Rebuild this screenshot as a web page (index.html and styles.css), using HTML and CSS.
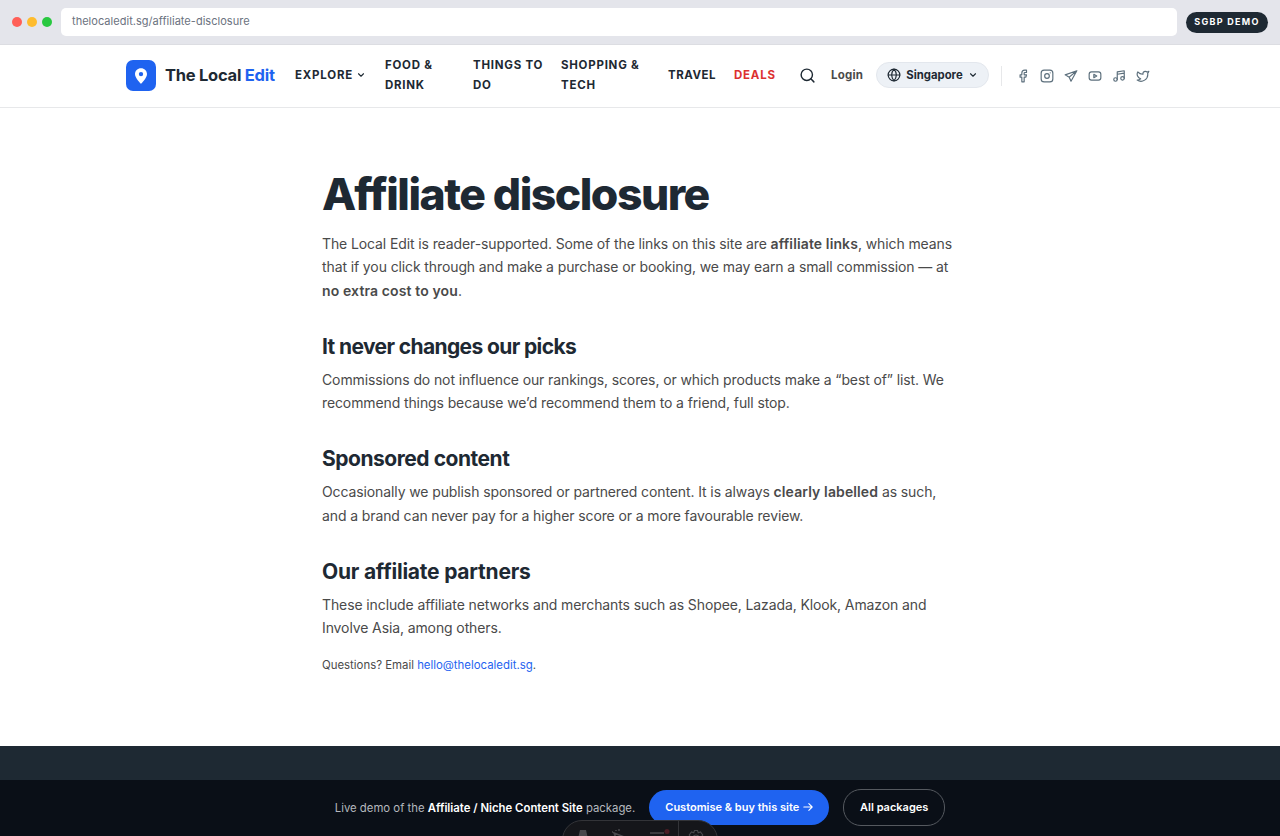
FILE: index.html
```html
<!DOCTYPE html>
<html lang="en">

<head>
    <meta charset="UTF-8" />
    <meta name="viewport" content="width=device-width, initial-scale=1.0" />
    <title>Affiliate disclosure | The Local Edit</title>
    <link rel="stylesheet" href="styles.css">
</head>

<body>
    <div class="browser-bar">
        <div class="dots">
            <span class="dot red"></span>
            <span class="dot yellow"></span>
            <span class="dot green"></span>
        </div>
        <div class="address">thelocaledit.sg/affiliate-disclosure</div>
        <span class="demo-badge">SGBP DEMO</span>
    </div>

    <header class="site-header">
        <a class="logo" href="#">
            <span class="logo-mark">
                <svg width="18" height="18" viewBox="0 0 24 24"><path fill="#fff" fill-rule="evenodd" d="M12 1.500c-4.500 0-8 3.500-8 7.900C4 15 12 22.500 12 22.500S20 15 20 9.400c0-4.400-3.500-7.900-8-7.900zm0 5a2.900 2.900 0 1 1 0 5.800 2.900 2.900 0 0 1 0-5.800z" /></svg>
            </span>
            <span class="logo-text">The Local <b>Edit</b></span>
        </a>

        <nav class="main-nav">
            <a class="explore" href="#">EXPLORE
                <svg class="icon chevron" width="10" height="10" viewBox="0 0 24 24"><path d="m6 9 6 6 6-6" /></svg>
            </a>
            <a class="food" href="#">FOOD &amp; DRINK</a>
            <a class="things" href="#">THINGS TO DO</a>
            <a class="shopping" href="#">SHOPPING &amp; TECH</a>
            <a class="travel" href="#">TRAVEL</a>
            <a class="deals" href="#">DEALS</a>
        </nav>

        <div class="tools">
            <svg class="icon search" width="17" height="17" viewBox="0 0 24 24"><circle cx="11" cy="11" r="8" /><path d="m21 21-4.300-4.300" /></svg>
            <a class="login" href="#">Login</a>
            <button class="region">
                <svg class="icon" width="14" height="14" viewBox="0 0 24 24"><circle cx="12" cy="12" r="10" /><path d="M2 12h20M12 2a15.300 15.300 0 0 1 4 10 15.300 15.300 0 0 1-4 10 15.300 15.300 0 0 1-4-10 15.300 15.300 0 0 1 4-10z" /></svg>
                <span>Singapore</span>
                <svg class="icon chevron" width="10" height="10" viewBox="0 0 24 24"><path d="m6 9 6 6 6-6" /></svg>
            </button>
        </div>

        <div class="social">
            <svg class="icon" viewBox="0 0 24 24"><path d="M18 2h-3a5 5 0 0 0-5 5v3H7v4h3v8h4v-8h3l1-4h-4V7a1 1 0 0 1 1-1h3z" /></svg>
            <svg class="icon" viewBox="0 0 24 24"><rect x="2" y="2" width="20" height="20" rx="5" /><circle cx="12" cy="12" r="4" /><path d="M17.500 6.500h.01" /></svg>
            <svg class="icon" viewBox="0 0 24 24"><path d="M22 3 2 10l7 4 3 7zM22 3 9 14" /></svg>
            <svg class="icon" viewBox="0 0 24 24"><rect x="2" y="5" width="20" height="14" rx="4" /><path d="m10 9 5 3-5 3z" /></svg>
            <svg class="icon" viewBox="0 0 24 24"><path d="M9 18V5l12-2v13M9 9l12-2" /><circle cx="6" cy="18" r="3" /><circle cx="18" cy="16" r="3" /></svg>
            <svg class="icon" viewBox="0 0 24 24"><path d="M22 4s-.7 2.100-2 3.400c1.600 10-9.400 17.300-18 11.600 2.200.1 4.400-.6 6-2C3 15.500.5 9.600 3 5c2.200 2.600 5.600 4.100 9 4-.9-4.200 4-6.600 7-3.800 1.100 0 3-1.200 3-1.200z" /></svg>
        </div>
    </header>

    <main class="article">
        <h1>Affiliate disclosure</h1>
        <p>The Local Edit is reader-supported. Some of the links on this site are <strong>affiliate links</strong>, which means that if you click through and make a purchase or booking, we may earn a small commission — at <strong>no extra cost to you</strong>.</p>

        <h2 class="picks">It never changes our picks</h2>
        <p>Commissions do not influence our rankings, scores, or which products make a “best of” list. We recommend things because we’d recommend them to a friend, full stop.</p>

        <h2 class="sponsored">Sponsored content</h2>
        <p>Occasionally we publish sponsored or partnered content. It is always <strong>clearly labelled</strong> as such, and a brand can never pay for a higher score or a more favourable review.</p>

        <h2 class="partners">Our affiliate partners</h2>
        <p>These include affiliate networks and merchants such as Shopee, Lazada, Klook, Amazon and Involve Asia, among others.</p>
        <p class="questions">Questions? Email <a href="#">hello@thelocaledit.sg</a>.</p>
    </main>

    <footer class="site-footer"></footer>

    <div class="demo-bar">
        <span class="demo-text">Live demo of the <b>Affiliate / Niche Content Site</b> package.</span>
        <a class="buy" href="#">Customise &amp; buy this site
            <svg class="icon chevron" width="10" height="10" viewBox="0 0 24 24"><path d="M2 12h20M14 4l8 8-8 8" /></svg>
        </a>
        <a class="packages" href="#">All packages</a>
        <div class="dev-toolbar">
            <svg width="16" height="18" viewBox="0 0 16 18"><path class="solid" d="M5 1h6l4 17h-4l-3-5-3 5H1z" /></svg>
            <svg width="18" height="18" viewBox="0 0 18 18"><path d="M3 4l13 5-6 2-2 6zM5 1v1M8 0v2M1 3h1" /></svg>
            <svg width="21" height="18" viewBox="0 0 21 18"><path d="M1 4h14M1 11h15" /><circle class="alert" cx="18" cy="2.500" r="2.500" /></svg>
            <span class="separator"></span>
            <svg width="18" height="18" viewBox="0 0 24 24"><path d="M10 2h4l1 3 3-1 3 4-2 3 2 4-3 4-3-1-1 3h-4l-1-3-3 1-3-4 2-4-2-3 3-4 3 1z" /><circle cx="12" cy="12" r="4" /></svg>
        </div>
    </div>
</body>

</html>
```
FILE: styles.css
```css
* {
    box-sizing: border-box;
}

body {
    font-family: Inter, "Liberation Sans", sans-serif;
    margin: 0;
    height: 836px;
    overflow: hidden;
    display: flex;
    flex-direction: column;
    background: white;
    color: #1e2933;
}

a {
    color: inherit;
    text-decoration: none;
}

.icon {
    fill: none;
    stroke: currentColor;
    stroke-width: 2;
    stroke-linecap: round;
    stroke-linejoin: round;
    flex-shrink: 0;
}

.chevron {
    stroke-width: 2.6;
}

.browser-bar {
    display: flex;
    align-items: center;
    height: 45px;
    padding: 0 12px;
    background: #e4e5eb;
    border-bottom: 1px solid #dcdde2;
}

.dots {
    display: flex;
    gap: 5px;
    margin-right: 9px;
}

.dot {
    width: 10px;
    height: 10px;
    border-radius: 50%;
}

.red {
    background: #ff5f57;
}

.yellow {
    background: #febc2e;
}

.green {
    background: #28c840;
}

.address {
    flex: 1;
    height: 28px;
    line-height: 27px;
    padding-left: 11px;
    border-radius: 5px;
    background: white;
    color: #6b7280;
    font-size: 11px;
    letter-spacing: 0.03px;
}

.demo-badge {
    width: 82px;
    height: 21px;
    line-height: 20px;
    margin-left: 9px;
    border-radius: 11px;
    background: #1e2933;
    color: white;
    font-size: 9px;
    font-weight: 700;
    letter-spacing: 1.3px;
    text-align: center;
}

.site-header {
    display: flex;
    align-items: center;
    height: 63px;
    padding: 0 126px 1px;
    border-bottom: 1px solid #e7e8ea;
}

.logo {
    display: flex;
    align-items: center;
    width: 169px;
    gap: 9px;
}

.logo-mark {
    display: flex;
    align-items: center;
    justify-content: center;
    width: 30px;
    height: 31px;
    border-radius: 7px;
    background: #1f63f0;
}

.logo-text {
    padding-bottom: 1px;
    font-size: 16.5px;
    font-weight: 700;
    letter-spacing: -0.25px;
    white-space: nowrap;
}

.logo-text b {
    color: #1f63f0;
    font-weight: 700;
}

.main-nav {
    display: flex;
    align-items: center;
    padding-bottom: 1px;
    font-size: 11.5px;
    font-weight: 700;
    line-height: 20px;
    letter-spacing: 0.75px;
}

.explore {
    display: flex;
    align-items: center;
    gap: 3px;
    width: 90px;
    letter-spacing: 0.8px;
}

.food {
    width: 70px;
    margin-right: 18px;
}

.things {
    width: 74px;
    margin-right: 14px;
}

.shopping {
    width: 90px;
    margin-right: 17px;
}

.travel {
    width: 66px;
    letter-spacing: 0.5px;
}

.deals {
    width: 65px;
    color: #dc3030;
}

.tools {
    display: flex;
    align-items: center;
    font-size: 11.5px;
}

.login {
    width: 45px;
    margin-left: 15px;
    padding-bottom: 1px;
    color: #4a4a4a;
    font-weight: 700;
    letter-spacing: 0.2px;
}

.region {
    display: flex;
    align-items: center;
    justify-content: center;
    gap: 5px;
    width: 113px;
    height: 26px;
    margin-top: -2px;
    padding: 0;
    border: 1px solid #e3e7ed;
    border-radius: 13px;
    background: #edf1f6;
    color: #1e2933;
    font: 700 11.3px Inter, sans-serif;
}

.social {
    display: flex;
    align-items: center;
    gap: 10px;
    height: 20px;
    margin-left: 12px;
    padding-left: 14px;
    border-left: 1px solid #e7e8ea;
    color: #5c6f7c;
}

.social .icon {
    width: 14px;
    height: 14px;
}

.article {
    width: 636px;
    height: 638px;
    margin: 0 auto;
    padding-top: 61px;
    color: #4a4a4a;
}

h1 {
    margin: 0 0 13px;
    color: #1e2933;
    font-size: 44.5px;
    line-height: 50px;
    font-weight: 800;
    letter-spacing: -1.5px;
}

h2 {
    margin: 30px 0 6px;
    color: #1e2933;
    font-size: 21px;
    line-height: 30px;
    font-weight: 700;
}

.picks {
    letter-spacing: -0.62px;
}

.sponsored {
    letter-spacing: -0.47px;
}

.partners {
    letter-spacing: -0.22px;
}

p {
    margin: 0;
    font-size: 14px;
    line-height: 23.3px;
    letter-spacing: -0.11px;
}

strong {
    font-weight: 600;
    letter-spacing: 0.12px;
}

.questions {
    margin-top: 16px;
    font-size: 11.4px;
    line-height: 19px;
    letter-spacing: 0;
}

.questions a {
    color: #1f63f0;
}

.site-footer {
    height: 34px;
    background: #1e2933;
}

.demo-bar {
    position: relative;
    display: flex;
    align-items: center;
    justify-content: center;
    height: 56px;
    padding-bottom: 1px;
    background: #0a0f17;
    color: white;
    font-size: 11.35px;
}

.demo-text {
    margin-right: 14px;
    color: #b5b8be;
}

.demo-text b {
    color: white;
    font-weight: 600;
}

.buy,
.packages {
    display: flex;
    align-items: center;
    justify-content: center;
    padding-bottom: 1px;
    border-radius: 18px;
    font-size: 11px;
    font-weight: 600;
}

.buy {
    gap: 4px;
    width: 180px;
    height: 35px;
    margin-right: 14px;
    background: #1f63f0;
}

.packages {
    width: 102px;
    height: 37px;
    border: 1px solid #55595f;
}

.dev-toolbar {
    position: absolute;
    top: 40px;
    left: 562px;
    display: flex;
    gap: 20px;
    width: 156px;
    height: 40px;
    padding: 8px 12px;
    overflow: hidden;
    border: 1px solid #333438;
    border-radius: 20px;
    background: #15161a;
}

.dev-toolbar svg {
    flex-shrink: 0;
    fill: none;
    stroke: #48484c;
    stroke-width: 1.5;
}

.dev-toolbar .solid {
    fill: #48484c;
    stroke: none;
}

.dev-toolbar .alert {
    fill: #4a1c24;
    stroke: none;
}

.separator {
    flex-shrink: 0;
    width: 1px;
    height: 40px;
    margin: -8px -12px;
    background: #333438;
}
```
